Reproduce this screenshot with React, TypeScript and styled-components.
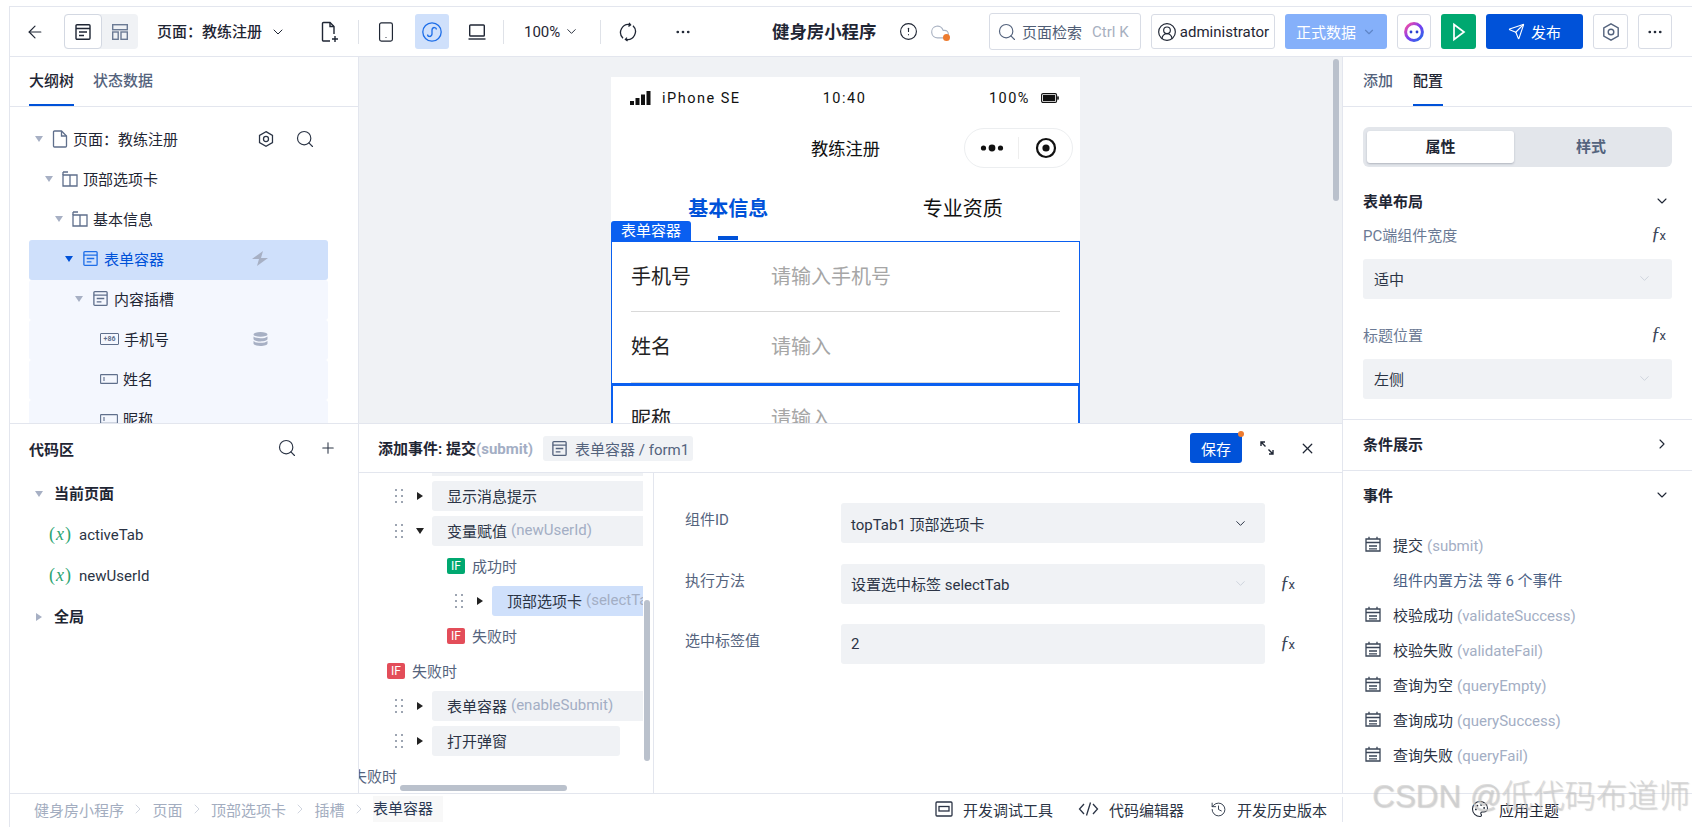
import React from 'react';
import styled, { createGlobalStyle } from 'styled-components';
import {
  ArrowLeft, ChevronDown, ChevronRight, CircleAlert, CircleUserRound, Cloud, Ellipsis,
  History, Palette, Plus, Search, Send, Smartphone, X,
} from 'lucide-react';

const Global = createGlobalStyle`
  html, body { margin: 0; padding: 0; background: #fff; }
  body { font-family: Roboto, "Noto Sans CJK SC", sans-serif; color: #1f2634; overflow: hidden; }
  * { box-sizing: border-box; }
`;

const line = '#e3e6ee';
const fill = '#f0f2f5';
const blue = '#0052d9';

const Page = styled.div`
  position: relative; width: 1692px; height: 827px; overflow: hidden; padding: 6px 0 0 9px; background: #fff;
`;
const Frame = styled.div`
  height: 100%; display: flex; flex-direction: column; border-top: 1px solid ${line}; border-left: 1px solid ${line};
`;

/* top bar */
const TopBar = styled.header`
  flex: 0 0 50px; display: flex; align-items: center; padding: 0 20px 0 13px; border-bottom: 1px solid ${line};
`;
const ToolSlot = styled.span<{ $ml?: number; $w?: number; $active?: boolean }>`
  flex: 0 0 auto; display: inline-flex; align-items: center; justify-content: center;
  width: ${p => p.$w ?? 24}px; height: 35px; margin-left: ${p => p.$ml ?? 0}px; border-radius: 3px;
  background: ${p => (p.$active ? '#cfe0fb' : 'transparent')}; color: #1f2634;
`;
const ViewToggle = styled.div`
  flex: 0 0 74px; height: 35px; margin-left: 17px; display: flex; background: ${fill}; border-radius: 4px;
`;
const ViewOption = styled.span<{ $on?: boolean }>`
  flex: 1; display: flex; align-items: center; justify-content: center;
  background: ${p => (p.$on ? '#fff' : 'transparent')}; border: ${p => (p.$on ? `1px solid #d3d8e2` : 'none')};
  border-radius: 4px; color: ${p => (p.$on ? '#1f2634' : '#6b7a94')};
`;
const PageName = styled.span`
  margin-left: 19px; font-size: 15px; line-height: 20px; font-weight: 500; white-space: nowrap; width: 105px;
`;
const ToolSep = styled.i<{ $ml: number }>`
  flex: 0 0 1px; height: 24px; margin-left: ${p => p.$ml}px; background: #dfe2e8;
`;
const Zoom = styled.span`
  margin-left: 20px; width: 36px; font-size: 15px; line-height: 20px;
`;
const Title = styled.strong`
  margin-left: 77px; width: 105px; font-size: 17.4px; line-height: 24px; font-weight: 700; white-space: nowrap;
`;
const CloudWrap = styled(ToolSlot)`
  position: relative; color: #a9b2c2;
`;
const CloudDot = styled.i`
  position: absolute; right: 0; bottom: 8px; width: 7px; height: 7px; border-radius: 50%; background: #ed7b2f;
`;
const TopRight = styled.div`
  margin-left: auto; display: flex; align-items: center; gap: 10px;
`;
const SearchBox = styled.div`
  width: 152px; height: 37px; display: flex; align-items: center; padding: 0 7px;
  border: 1px solid #d8dce5; border-radius: 3px; color: #6b7a94; font-size: 15px; white-space: nowrap;
`;
const SearchHint = styled.span`
  margin-left: 5px; color: #4f5d75;
`;
const KeyHint = styled.span`
  margin-left: 10px; color: #a7b0c0;
`;
const OutlineBtn = styled.button<{ $w: number }>`
  width: ${p => p.$w}px; height: 35px; padding: 0; display: flex; align-items: center; justify-content: center; gap: 3px;
  background: #fff; border: 1px solid #d8dce5; border-radius: 3px; color: #1f2634;
  font: 400 15px Roboto, "Noto Sans CJK SC", sans-serif;
`;
const SolidBtn = styled.button<{ $w: number; $bg: string }>`
  width: ${p => p.$w}px; height: 35px; padding: 0; display: flex; align-items: center; justify-content: center; gap: 6px;
  background: ${p => p.$bg}; border: 0; border-radius: 3px; color: #fff;
  font: 400 15px Roboto, "Noto Sans CJK SC", sans-serif;
`;

/* workspace */
const Workspace = styled.div`
  flex: 0 0 736px; min-height: 0; display: flex;
`;
const Stage = styled.div`
  flex: 0 0 1333px; min-height: 0; display: flex; flex-direction: column; border-right: 1px solid ${line};
`;
const StageTop = styled.div`
  flex: 0 0 367px; min-height: 0; display: flex; border-bottom: 1px solid ${line};
`;
const StageBottom = styled.div`
  flex: 1; min-height: 0; display: flex;
`;
const SidePane = styled.section`
  flex: 0 0 349px; min-height: 0; display: flex; flex-direction: column; border-right: 1px solid ${line}; overflow: hidden;
`;
const Tabs = styled.nav<{ $gap: number; $pl: number }>`
  flex: 0 0 50px; display: flex; gap: ${p => p.$gap}px; padding-left: ${p => p.$pl}px; border-bottom: 1px solid ${line};
`;
const Tab = styled.span<{ $on?: boolean }>`
  height: 49px; line-height: 48px; font-size: 15px; font-weight: 500; white-space: nowrap;
  color: ${p => (p.$on ? '#1f2634' : '#54637d')};
  border-bottom: 2px solid ${p => (p.$on ? blue : 'transparent')};
`;
const TreeList = styled.div`
  padding: 13px 30px 0 19px; display: flex; flex-direction: column;
`;
const TreeRow = styled.div<{ $level: number; $state?: 'on' | 'sub' }>`
  flex: 0 0 40px; height: 40px; display: flex; align-items: center; padding: 0 0 3px ${p => 6 + p.$level * 10}px;
  border-radius: 3px; font-size: 15px; white-space: nowrap;
  background: ${p => (p.$state === 'on' ? '#cfe0fb' : p.$state === 'sub' ? '#f4f7fe' : 'transparent')};
  color: ${p => (p.$state === 'on' ? blue : '#1f2634')};
`;
const Arrow = styled.i<{ $dir?: 'down' | 'right'; $color?: string; $size?: number }>`
  flex: 0 0 auto; width: 0; height: 0; display: inline-block;
  border-style: solid;
  ${p => {
    const s = p.$size ?? 4;
    return p.$dir === 'right'
      ? `border-width: ${s}px 0 ${s}px ${s + 2}px; border-color: transparent transparent transparent ${p.$color ?? '#a7b0c4'};`
      : `border-width: ${s + 2}px ${s}px 0 ${s}px; border-color: ${p.$color ?? '#a7b0c4'} transparent transparent transparent;`;
  }}
`;
const TreeArrow = styled(Arrow)`
  margin-right: 9px;
`;
const TreeIcon = styled.span<{ $color?: string }>`
  flex: 0 0 16px; display: flex; margin-right: 5px; color: ${p => p.$color ?? '#5f6f8c'};
`;
const LeafIcon = styled.span`
  flex: 0 0 18px; display: flex; margin: 0 5px 0 65px; color: #5f6f8c;
`;
const RowIcons = styled.span<{ $left: number }>`
  position: absolute; left: ${p => p.$left}px; display: flex; align-items: center; gap: 20px; color: #2b3445;
`;
const RowRel = styled(TreeRow)`
  position: relative;
`;

/* canvas */
const Canvas = styled.main`
  position: relative; flex: 1; background: ${fill}; overflow: hidden; padding-top: 20px;
`;
const CanvasThumb = styled.i`
  position: absolute; right: 3px; top: 2px; width: 6px; height: 142px; border-radius: 3px; background: #bac1cc;
`;
const Phone = styled.div`
  width: 469px; margin-left: 252px; background: #fff; font-family: Roboto, "Noto Sans CJK SC", sans-serif;
`;
const StatusBar = styled.div`
  height: 42px; display: grid; grid-template-columns: 1fr 1fr 1fr; align-items: center; padding: 0 21px 0 19px;
  font-size: 14.5px; letter-spacing: 1.5px; color: #111;
`;
const StatusCell = styled.span<{ $align: string }>`
  display: flex; align-items: center; justify-content: ${p => p.$align}; gap: 11px; white-space: nowrap;
`;
const NavBar = styled.div`
  position: relative; height: 58px; padding-bottom: 2px; display: flex; align-items: center; justify-content: center; font-size: 17.3px; color: #111;
`;
const Capsule = styled.div`
  position: absolute; right: 7px; top: 9px; width: 109px; height: 40px; display: flex; align-items: center;
  border: 1px solid #eceef0; border-radius: 20px; background: #fff;
`;
const CapsulePart = styled.span`
  flex: 1; display: flex; align-items: center; justify-content: center;
`;
const CapsuleSep = styled.i`
  width: 1px; height: 22px; background: #eee;
`;
const PhoneTabs = styled.div`
  position: relative; height: 64px; display: flex;
`;
const PhoneTab = styled.span<{ $on?: boolean }>`
  position: relative; flex: 1; text-align: center; padding-top: 18px; font-size: 20px; line-height: 28px;
  font-weight: ${p => (p.$on ? 700 : 400)}; color: ${p => (p.$on ? blue : '#111')};
  ${p => p.$on && `&::after { content: ''; position: absolute; left: 50%; margin-left: -10px; bottom: 1px; width: 20px; height: 4px; background: ${blue}; }`}
`;
const SelectTag = styled.span`
  position: absolute; left: 0; bottom: 0; width: 80px; height: 20px; background: #0a5ff0; color: #fff;
  border-radius: 3px 3px 0 0; font-size: 15px; line-height: 20px; text-align: center;
`;
const FormBox = styled.div`
  border: 1px solid #0a5ff0; padding: 0 19px;
`;
const NextFormBox = styled.div`
  border: 2px solid #0a5ff0; padding: 0 18px;
`;
const FormRow = styled.div<{ $h: number; $line?: boolean }>`
  height: ${p => p.$h}px; padding-bottom: 3px; display: flex; align-items: center; font-size: 20px;
  border-bottom: ${p => (p.$line ? '1px solid #d9d9d9' : 'none')};
`;
const FormLabel = styled.span`
  width: 140px; color: #222;
`;
const FormHolder = styled.span`
  color: #a6a6a6;
`;

/* code zone */
const CodeHead = styled.div`
  flex: 0 0 50px; display: flex; align-items: center; padding: 0 21px 2px 19px; font-size: 15px; font-weight: 700;
`;
const CodeTools = styled.span`
  margin-left: auto; display: flex; align-items: center; gap: 22px; color: #2b3445;
`;
const CodeGroup = styled.div`
  flex: 0 0 40px; margin-top: 1px; padding: 0 0 2px 25px; display: flex; align-items: center; font-size: 15px; font-weight: 700; line-height: 20px;
`;
const GroupMark = styled.span`
  flex: 0 0 8px; display: flex; justify-content: center; margin-right: 11px;
`;
const CodeVar = styled.div`
  flex: 0 0 41px; display: flex; align-items: center; padding: 0 0 2px 39px; font-size: 15px; color: #2b3445;
`;
const VarMark = styled.span`
  width: 30px; font-family: "Liberation Serif", serif; font-size: 18px; color: #2ba471; letter-spacing: 1px;
  em { font-style: italic; }
`;

/* event editor */
const Editor = styled.section`
  flex: 1; min-width: 0; min-height: 0; display: flex; flex-direction: column;
`;
const EditorHead = styled.div`
  flex: 0 0 49px; display: flex; align-items: center; padding: 0 26px 0 19px; border-bottom: 1px solid ${line};
`;
const EditorTitle = styled.strong`
  font-size: 15px; font-weight: 700; white-space: nowrap; padding-bottom: 2px;
  span { color: #a3aec4; }
`;
const TargetChip = styled.span`
  margin-left: 10px; height: 25px; width: 150px; display: flex; align-items: center; gap: 7px; padding-left: 8px;
  background: ${fill}; border-radius: 3px; font-size: 15px; color: #54637d; white-space: nowrap;
`;
const SaveBtn = styled.button`
  position: relative; margin-left: auto; width: 52px; height: 30px; padding: 0; border: 0; border-radius: 3px;
  background: ${blue}; color: #fff; font: 400 15px Roboto, "Noto Sans CJK SC", sans-serif;
`;
const SaveDot = styled.i`
  position: absolute; right: -2px; top: -2px; width: 6px; height: 6px; border-radius: 50%; background: #ed7b2f;
`;
const HeadIcon = styled.span<{ $ml: number }>`
  display: flex; margin-left: ${p => p.$ml}px; color: #1f2634;
`;
const EditorBody = styled.div`
  flex: 1; min-height: 0; display: flex;
`;
const EventList = styled.div`
  position: relative; flex: 0 0 295px; overflow: hidden; border-right: 1px solid ${line}; padding-right: 10px;
`;
const ClippedBlock = styled.div`
  height: 3px; margin: 0 0 5px 73px; background: ${fill};
`;
const Step = styled.div<{ $indent?: number }>`
  height: 30px; margin-bottom: 5px; display: flex; align-items: center; padding-left: ${p => p.$indent ?? 0}px;
  white-space: nowrap; font-size: 15px;
`;
const Grip = styled.span`
  flex: 0 0 8px; display: flex; margin-right: 13px; color: #7d8799;
`;
const StepMark = styled.span`
  flex: 0 0 8px; display: flex; justify-content: center; margin-right: 8px;
`;
const StepBlock = styled.div<{ $tone?: 'sel'; $w?: number }>`
  height: 30px; flex: ${p => (p.$w ? `0 0 ${p.$w}px` : '1')}; min-width: 0; overflow: hidden; display: flex; align-items: center; padding: 0 0 2px 15px;
  border-radius: ${p => (p.$w ? '3px' : '3px 0 0 3px')}; background: ${p => (p.$tone === 'sel' ? '#cfe0fb' : fill)}; color: #2b3445;
  em { font-style: normal; color: #a3aec4; margin-left: 4px; }
`;
const IfBadge = styled.span<{ $bg: string }>`
  width: 18px; height: 16px; margin-right: 7px; background: ${p => p.$bg}; color: #fff; border-radius: 2px;
  font-size: 12px; line-height: 16px; text-align: center;
`;
const BranchText = styled.span<{ $clip?: boolean }>`
  color: #54637d; padding-bottom: 2px; ${p => p.$clip && 'margin-left: -7px;'}
`;
const VThumb = styled.i`
  position: absolute; right: 3px; top: 127px; width: 6px; height: 161px; border-radius: 3px; background: #bac1cc;
`;
const HThumb = styled.i`
  position: absolute; left: 41px; bottom: 2px; width: 167px; height: 6px; border-radius: 3px; background: #bac1cc;
`;
const ActionForm = styled.div`
  flex: 1; padding: 30px 0 0 31px; display: flex; flex-direction: column; gap: 20.5px;
`;
const ActionRow = styled.div`
  display: flex; align-items: center;
`;
const ActionLabel = styled.label`
  flex: 0 0 156px; font-size: 15px; color: #54637d; margin-top: -9px;
`;
const Field = styled.div<{ $w: number }>`
  flex: 0 0 ${p => p.$w}px; height: 40px; display: flex; align-items: center; justify-content: space-between;
  padding: 0 17px 0 10px; background: ${fill}; border-radius: 3px; font-size: 15px; color: #2b3445; white-space: nowrap;
`;
const Fx = styled.span<{ $ml?: number }>`
  margin-left: ${p => p.$ml ?? 0}px; font-family: "Liberation Serif", "DejaVu Serif", serif; font-style: italic; font-size: 19px; color: #3a4557; line-height: 20px;
  small { font-family: Roboto, sans-serif; font-style: normal; font-size: 13px; margin-left: -1px; }
`;

/* right panel */
const RightPane = styled.aside`
  flex: 1; min-width: 0; display: flex; flex-direction: column;
`;
const RightBody = styled.div`
  padding: 20px 20px 0 20px;
`;
const Segment = styled.div`
  height: 40px; display: flex; padding: 4px; background: #e3e6eb; border-radius: 6px;
`;
const SegItem = styled.span<{ $on?: boolean }>`
  flex: ${p => (p.$on ? '0 0 147px' : 1)}; text-align: center; line-height: 32px; font-size: 15px; font-weight: 700; border-radius: 3px;
  background: ${p => (p.$on ? '#fff' : 'transparent')}; color: ${p => (p.$on ? '#1f2634' : '#54637d')};
  box-shadow: ${p => (p.$on ? '0 1px 2px rgba(60,70,90,.3)' : 'none')};
`;
const SectionHead = styled.div<{ $h: number; $mt?: number }>`
  height: ${p => p.$h}px; margin-top: ${p => p.$mt ?? 0}px; padding-bottom: 3px; display: flex; align-items: center; justify-content: space-between;
  font-size: 15px; font-weight: 700; color: #1f2634;
  svg { margin: 0 2px 0 0; }
`;
const PropLabel = styled.div<{ $mt: number }>`
  height: 22px; margin-top: ${p => p.$mt}px; display: flex; align-items: center; justify-content: space-between;
  padding: 0 6px 3px 0; font-size: 15px; color: #6b7a94;
`;
const PropSelect = styled.div`
  height: 40px; margin-top: 12px; display: flex; align-items: center; justify-content: space-between; padding: 0 20px 2px 11px;
  background: ${fill}; border-radius: 3px; font-size: 15px; color: #2b3445;
`;
const Divider = styled.div<{ $mt?: number }>`
  height: 1px; background: ${line}; margin-top: ${p => p.$mt ?? 0}px;
`;
const Section = styled.div`
  padding: 0 20px;
`;
const EventLines = styled.div`
  padding: 7px 0 0 2px; display: flex; flex-direction: column;
`;
const EventLine = styled.div<{ $sub?: boolean }>`
  height: 35px; padding: 0 0 3px ${p => (p.$sub ? 28 : 0)}px; display: flex; align-items: center; gap: 12px;
  font-size: 15px; color: ${p => (p.$sub ? '#4a5f85' : '#2b3445')}; white-space: nowrap;
  em { font-style: normal; color: #a3aec4; margin-left: 4px; }
  svg { flex: 0 0 16px; color: #3a4557; }
`;

/* footer */
const Footer = styled.footer`
  flex: 1; min-height: 0; display: flex; align-items: center; padding-bottom: 3px; border-top: 1px solid ${line};
`;
const Crumbs = styled.div`
  flex: 1; display: flex; align-items: center; padding-left: 24px; font-size: 15px; color: #a3adc0; white-space: nowrap;
`;
const CrumbSep = styled.span`
  display: flex; width: 28.5px; justify-content: center; color: #b8c0cf;
`;
const CrumbNow = styled.span`
  height: 26px; line-height: 26px; padding-right: 10px; background: #f8f8f8; color: #2b3a55;
`;
const FootTools = styled.div`
  height: 25px; flex: 0 0 auto; display: flex; align-items: center; padding-right: 15px; border-right: 1px solid ${line};
  font-size: 15px; color: #2b3445; white-space: nowrap;
`;
const FootTool = styled.span<{ $ml: number }>`
  display: flex; align-items: center; gap: 10px; margin-left: ${p => p.$ml}px;
`;
const ThemeCell = styled.div`
  flex: 0 0 349px; display: flex; align-items: center; gap: 10px; padding-left: 128px; font-size: 15px; color: #1f2634; white-space: nowrap;
`;
const Watermark = styled.div`
  position: absolute; left: 1372px; top: 777px; pointer-events: none; white-space: nowrap;
  font-family: "Liberation Sans", "Noto Sans CJK SC", sans-serif; font-size: 31.4px; line-height: 40px; font-weight: 300;
  color: rgba(205,205,205,.7); text-shadow: 1px 1px 1px rgba(150,150,150,.4);
`;

/* icons */
type IP = { s?: number };
const FormIcon = ({ s = 18 }: IP) => (
  <svg width={s} height={s} viewBox="0 0 18 18" fill="none" stroke="currentColor" strokeWidth="1.4">
    <rect x="2" y="1.7" width="14" height="14.6" rx="1" /><path d="M2 5.5h14M5 9h8M5 12.5h5" />
  </svg>
);
const LayoutIcon = () => (
  <svg width="18" height="18" viewBox="0 0 18 18" fill="none" stroke="currentColor" strokeWidth="1.4">
    <rect x="1.7" y="1.7" width="14.6" height="5" /><rect x="1.7" y="9" width="5.5" height="7.3" /><rect x="10" y="9" width="6.3" height="7.3" />
  </svg>
);
const FileAddIcon = () => (
  <svg width="20" height="24" viewBox="0 0 20 24" fill="none" stroke="currentColor" strokeWidth="1.4">
    <path d="M10 21H3.5a1 1 0 0 1-1-1V3.5a1 1 0 0 1 1-1H10l4 4V14" /><path d="M10 2.5V6.5H14M15 16v6M12 19h6" />
  </svg>
);
const MiniIcon = () => (
  <svg width="22" height="22" viewBox="0 0 22 22" fill="none" stroke="#1e6ee8" strokeWidth="1.3">
    <circle cx="11" cy="11" r="9.2" />
    <path d="M6.6 13.4c0 2.6 3.8 3 4.4-.2V8.8c.6-3.2 4.4-2.8 4.4-.2" />
  </svg>
);
const LaptopIcon = () => (
  <svg width="20" height="20" viewBox="0 0 20 20" fill="none" stroke="currentColor" strokeWidth="1.4">
    <rect x="2.7" y="3" width="14.6" height="11" rx=".8" /><path d="M1.5 17h17" />
  </svg>
);
const SyncIcon = () => (
  <svg width="20" height="20" viewBox="0 0 20 20" fill="none" stroke="currentColor" strokeWidth="1.3">
    <path d="M12 2.6A8 8 0 0 0 5 16.2M8 17.4a8 8 0 0 0 7-13.6" /><path d="M11 .8 12.6 2.8 10.4 4.4M9 15.6l-1.6 1.8L9.6 19" />
  </svg>
);
const AiIcon = () => (
  <svg width="22" height="22" viewBox="0 0 22 22" fill="none">
    <defs><linearGradient id="aig" x1="0" y1="0" x2="1" y2="1"><stop offset="0" stopColor="#ff4fa0" /><stop offset=".5" stopColor="#7b3df0" /><stop offset="1" stopColor="#1e6ee8" /></linearGradient></defs>
    <circle cx="11" cy="11" r="8.4" stroke="url(#aig)" strokeWidth="3" /><circle cx="8" cy="11" r="1.4" fill="#2a3fd0" /><circle cx="14" cy="11" r="1.4" fill="#2a3fd0" />
  </svg>
);
const PlayIcon = () => (
  <svg width="16" height="20" viewBox="0 0 16 20" fill="none" stroke="#fff" strokeWidth="1.7"><path d="M3 2.5 13 10 3 17.5Z" /></svg>
);
const HexIcon = ({ s = 20, color }: { s?: number; color?: string }) => (
  <svg width={s} height={s} viewBox="0 0 20 20" fill="none" stroke={color ?? 'currentColor'} strokeWidth="1.4">
    <path d="M10 1.8 17.2 6v8L10 18.2 2.8 14V6Z" /><circle cx="10" cy="10" r="2.8" />
  </svg>
);
const TabBoxIcon = () => (
  <svg width="16" height="16" viewBox="0 0 16 16" fill="none" stroke="currentColor" strokeWidth="1.3">
    <path d="M1 1h5M1 4h14v11H1zM8 4v11" /><path d="M1 1v3" />
  </svg>
);
const PageIcon = () => (
  <svg width="16" height="18" viewBox="0 0 16 18" fill="none" stroke="currentColor" strokeWidth="1.3">
    <path d="M9.5 1H2.5a1 1 0 0 0-1 1v14a1 1 0 0 0 1 1h11a1 1 0 0 0 1-1V6Z" /><path d="M9.5 1v5h5" />
  </svg>
);
const PhoneNumIcon = () => (
  <svg width="19" height="12" viewBox="0 0 19 12" fill="none" stroke="currentColor" strokeWidth="1">
    <rect x=".5" y=".5" width="18" height="11" rx=".5" />
    <text x="9.5" y="8.4" textAnchor="middle" fontFamily="Roboto, sans-serif" fontSize="7" fontWeight="700" fill="currentColor" stroke="none">+86</text>
  </svg>
);
const InputIcon = () => (
  <svg width="18" height="10" viewBox="0 0 18 10" fill="none" stroke="currentColor" strokeWidth="1.1">
    <rect x=".6" y=".6" width="16.8" height="8.8" rx=".5" /><path d="M4 3v4" />
  </svg>
);
const BoltIcon = () => (
  <svg width="16" height="15" viewBox="0 0 16 15" fill="#a7b0c4"><path d="M11 0 0 8h7l-2 7 11-8H9Z" /></svg>
);
const StackIcon = () => (
  <svg width="15" height="14" viewBox="0 0 15 14" fill="#a7b0c4">
    <ellipse cx="7.5" cy="2.4" rx="7" ry="2.4" />
    <path d="M.5 4.4c1.4 1.3 4 1.8 7 1.8s5.600-.5 7-1.800V7c0 1.300-3.100 2.400-7 2.400S.5 8.300.5 7Z" />
    <path d="M.5 9c1.400 1.300 4 1.800 7 1.800s5.600-.5 7-1.800v2.400c0 1.400-3.100 2.500-7 2.500s-7-1.100-7-2.500Z" />
  </svg>
);
const GripIcon = () => (
  <svg width="8" height="14" viewBox="0 0 8 14" fill="currentColor">
    {[1, 7, 13].map(y => [1, 7].map(x => <circle key={`${x}${y}`} cx={x} cy={y} r="1" />))}
  </svg>
);
const EventIcon = () => (
  <svg width="16" height="16" viewBox="0 0 16 16" fill="none" stroke="currentColor" strokeWidth="1.3">
    <path d="M1 3h14v12H1zM4 .8V3M12 .8V3" /><path d="M1 6.5h14M4 10h8M4 12.8h8" />
  </svg>
);
const ExpandIcon = () => (
  <svg width="18" height="18" viewBox="0 0 18 18" fill="none" stroke="currentColor" strokeWidth="1.4">
    <path d="M3 7V3h4M3 3l4.5 4.500M15 11v4h-4M15 15l-4.500-4.500" />
  </svg>
);
const DebugIcon = () => (
  <svg width="18" height="18" viewBox="0 0 18 18" fill="none" stroke="currentColor" strokeWidth="1.3">
    <rect x="1" y="2" width="16" height="14" rx="1" /><rect x="4" y="6.5" width="10" height="4.5" />
  </svg>
);
const CodeGlyph = () => (
  <svg width="21" height="16" viewBox="0 0 21 16" fill="none" stroke="currentColor" strokeWidth="1.3">
    <path d="M6 3 1.500 8 6 13M15 3l4.500 5L15 13M12.500 1.500 8.500 14.500" />
  </svg>
);
const SignalIcon = () => (
  <svg width="21" height="14" viewBox="0 0 21 14" fill="#111">
    <rect x="0" y="10" width="4" height="4" /><rect x="5.500" y="7" width="4" height="7" /><rect x="11" y="3.500" width="4" height="10.500" /><rect x="16.500" y="0" width="4" height="14" />
  </svg>
);
const BatteryIcon = () => (
  <svg width="18" height="10" viewBox="0 0 18 10">
    <rect x=".6" y=".6" width="15" height="8.800" rx="1.400" fill="none" stroke="#111" strokeWidth="1.100" />
    <rect x="2" y="2" width="12.200" height="6" fill="#111" /><rect x="16.200" y="3.400" width="1.600" height="3.200" fill="#111" />
  </svg>
);
const DotsIcon = () => (
  <svg width="24" height="8" viewBox="0 0 24 8" fill="#111"><circle cx="3.500" cy="4" r="2.600" /><circle cx="12" cy="4" r="3.400" /><circle cx="20.500" cy="4" r="2.600" /></svg>
);
const RecordIcon = () => (
  <svg width="22" height="22" viewBox="0 0 22 22" fill="none"><circle cx="11" cy="11" r="9" stroke="#111" strokeWidth="2.200" /><circle cx="11" cy="11" r="3.600" fill="#111" /></svg>
);
const FxMark = ({ ml }: { ml?: number }) => <Fx $ml={ml}>ƒ<small>x</small></Fx>;

const events: [string, string][] = [
  ['校验成功', 'validateSuccess'], ['校验失败', 'validateFail'], ['查询为空', 'queryEmpty'], ['查询成功', 'querySuccess'], ['查询失败', 'queryFail'],
];

const Handle = ({ down }: { down?: boolean }) => (
  <>
    <Grip><GripIcon /></Grip>
    <StepMark><Arrow $dir={down ? 'down' : 'right'} $color="#222" /></StepMark>
  </>
);

export default function App() {
  return (
    <Page>
      <Global />
      <Frame>
        <TopBar>
          <ToolSlot><ArrowLeft size={20} strokeWidth={1.4} /></ToolSlot>
          <ViewToggle>
            <ViewOption $on><FormIcon /></ViewOption>
            <ViewOption><LayoutIcon /></ViewOption>
          </ViewToggle>
          <PageName>页面：教练注册</PageName>
          <ToolSlot $ml={8} $w={16}><ChevronDown size={16} strokeWidth={1.5} /></ToolSlot>
          <ToolSlot $ml={32}><FileAddIcon /></ToolSlot>
          <ToolSep $ml={16} />
          <ToolSlot $ml={15}><Smartphone size={22} strokeWidth={1.3} /></ToolSlot>
          <ToolSlot $ml={17} $w={34} $active><MiniIcon /></ToolSlot>
          <ToolSlot $ml={16}><LaptopIcon /></ToolSlot>
          <ToolSep $ml={14} />
          <Zoom>100%</Zoom>
          <ToolSlot $ml={3} $w={16}><ChevronDown size={15} strokeWidth={1.5} /></ToolSlot>
          <ToolSep $ml={21} />
          <ToolSlot $ml={15}><SyncIcon /></ToolSlot>
          <ToolSlot $ml={31}><Ellipsis size={18} strokeWidth={1.6} /></ToolSlot>
          <Title>健身房小程序</Title>
          <ToolSlot $ml={21} $w={20}><CircleAlert size={19} strokeWidth={1.4} /></ToolSlot>
          <CloudWrap $ml={12} $w={20}><Cloud size={20} strokeWidth={1.4} /><CloudDot /></CloudWrap>
          <TopRight>
            <SearchBox>
              <Search size={20} strokeWidth={1.4} color="#54637d" />
              <SearchHint>页面检索</SearchHint>
              <KeyHint>Ctrl K</KeyHint>
            </SearchBox>
            <OutlineBtn $w={124}><CircleUserRound size={20} strokeWidth={1.4} />administrator</OutlineBtn>
            <SolidBtn $w={102} $bg="#85b0fa">正式数据<ChevronDown size={14} color="#5f86c8" /></SolidBtn>
            <OutlineBtn $w={34}><AiIcon /></OutlineBtn>
            <SolidBtn $w={35} $bg="#00a870"><PlayIcon /></SolidBtn>
            <SolidBtn $w={97} $bg={blue}><Send size={17} strokeWidth={1.6} />发布</SolidBtn>
            <OutlineBtn $w={35}><HexIcon color="#54637d" /></OutlineBtn>
            <OutlineBtn $w={34}><Ellipsis size={18} strokeWidth={1.6} /></OutlineBtn>
          </TopRight>
        </TopBar>
        <Workspace>
          <Stage>
            <StageTop>
              <SidePane>
                <Tabs $gap={19} $pl={19}>
                  <Tab $on>大纲树</Tab>
                  <Tab>状态数据</Tab>
                </Tabs>
                <TreeList>
                  <RowRel $level={0}>
                    <TreeArrow /><TreeIcon><PageIcon /></TreeIcon>页面：教练注册
                    <RowIcons $left={228}><HexIcon s={18} /><Search size={20} strokeWidth={1.4} /></RowIcons>
                  </RowRel>
                  <TreeRow $level={1}><TreeArrow /><TreeIcon><TabBoxIcon /></TreeIcon>顶部选项卡</TreeRow>
                  <TreeRow $level={2}><TreeArrow /><TreeIcon><TabBoxIcon /></TreeIcon>基本信息</TreeRow>
                  <RowRel $level={3} $state="on">
                    <TreeArrow $color={blue} /><TreeIcon $color="#1e6ee8"><FormIcon s={17} /></TreeIcon>表单容器
                    <RowIcons $left={223}><BoltIcon /></RowIcons>
                  </RowRel>
                  <TreeRow $level={4} $state="sub"><TreeArrow /><TreeIcon><FormIcon s={17} /></TreeIcon>内容插槽</TreeRow>
                  <RowRel $level={0} $state="sub">
                    <LeafIcon><PhoneNumIcon /></LeafIcon>手机号
                    <RowIcons $left={224}><StackIcon /></RowIcons>
                  </RowRel>
                  <TreeRow $level={0} $state="sub"><LeafIcon><InputIcon /></LeafIcon>姓名</TreeRow>
                  <TreeRow $level={0} $state="sub"><LeafIcon><InputIcon /></LeafIcon>昵称</TreeRow>
                </TreeList>
              </SidePane>
              <Canvas>
                <Phone>
                  <StatusBar>
                    <StatusCell $align="flex-start"><SignalIcon />iPhone SE</StatusCell>
                    <StatusCell $align="center">10:40</StatusCell>
                    <StatusCell $align="flex-end">100%<BatteryIcon /></StatusCell>
                  </StatusBar>
                  <NavBar>
                    教练注册
                    <Capsule>
                      <CapsulePart><DotsIcon /></CapsulePart>
                      <CapsuleSep />
                      <CapsulePart><RecordIcon /></CapsulePart>
                    </Capsule>
                  </NavBar>
                  <PhoneTabs>
                    <PhoneTab $on>基本信息</PhoneTab>
                    <PhoneTab>专业资质</PhoneTab>
                    <SelectTag>表单容器</SelectTag>
                  </PhoneTabs>
                  <FormBox>
                    <FormRow $h={70} $line><FormLabel>手机号</FormLabel><FormHolder>请输入手机号</FormHolder></FormRow>
                    <FormRow $h={71} $line><FormLabel>姓名</FormLabel><FormHolder>请输入</FormHolder></FormRow>
                  </FormBox>
                  <NextFormBox>
                    <FormRow $h={66}><FormLabel>昵称</FormLabel><FormHolder>请输入</FormHolder></FormRow>
                  </NextFormBox>
                </Phone>
                <CanvasThumb />
              </Canvas>
            </StageTop>
            <StageBottom>
              <SidePane>
                <CodeHead>
                  代码区
                  <CodeTools><Search size={20} strokeWidth={1.4} /><Plus size={18} strokeWidth={1.4} /></CodeTools>
                </CodeHead>
                <CodeGroup><GroupMark><Arrow /></GroupMark>当前页面</CodeGroup>
                <CodeVar><VarMark>(<em>x</em>)</VarMark>activeTab</CodeVar>
                <CodeVar><VarMark>(<em>x</em>)</VarMark>newUserId</CodeVar>
                <CodeGroup><GroupMark><Arrow $dir="right" /></GroupMark>全局</CodeGroup>
              </SidePane>
              <Editor>
                <EditorHead>
                  <EditorTitle>添加事件: 提交<span>(submit)</span></EditorTitle>
                  <TargetChip><FormIcon s={17} />表单容器 / form1</TargetChip>
                  <SaveBtn>保存<SaveDot /></SaveBtn>
                  <HeadIcon $ml={16}><ExpandIcon /></HeadIcon>
                  <HeadIcon $ml={23}><X size={17} strokeWidth={1.8} /></HeadIcon>
                </EditorHead>
                <EditorBody>
                  <EventList>
                    <ClippedBlock />
                    <Step $indent={36}><Handle /><StepBlock>显示消息提示</StepBlock></Step>
                    <Step $indent={36}><Handle down /><StepBlock>变量赋值<em>(newUserId)</em></StepBlock></Step>
                    <Step $indent={88}><IfBadge $bg="#00a870">IF</IfBadge><BranchText>成功时</BranchText></Step>
                    <Step $indent={96}><Handle /><StepBlock $tone="sel">顶部选项卡<em>(selectTab)</em></StepBlock></Step>
                    <Step $indent={88}><IfBadge $bg="#e34d59">IF</IfBadge><BranchText>失败时</BranchText></Step>
                    <Step $indent={28}><IfBadge $bg="#e34d59">IF</IfBadge><BranchText>失败时</BranchText></Step>
                    <Step $indent={36}><Handle /><StepBlock>表单容器<em>(enableSubmit)</em></StepBlock></Step>
                    <Step $indent={36}><Handle /><StepBlock $w={188}>打开弹窗</StepBlock></Step>
                    <Step><BranchText $clip>失败时</BranchText></Step>
                    <VThumb />
                    <HThumb />
                  </EventList>
                  <ActionForm>
                    <ActionRow>
                      <ActionLabel>组件ID</ActionLabel>
                      <Field $w={424}>topTab1 顶部选项卡<ChevronDown size={15} strokeWidth={1.6} /></Field>
                    </ActionRow>
                    <ActionRow>
                      <ActionLabel>执行方法</ActionLabel>
                      <Field $w={424}>设置选中标签 selectTab<ChevronDown size={15} strokeWidth={1.2} color="#c3c9d4" /></Field>
                      <FxMark ml={15} />
                    </ActionRow>
                    <ActionRow>
                      <ActionLabel>选中标签值</ActionLabel>
                      <Field $w={424}>2</Field>
                      <FxMark ml={15} />
                    </ActionRow>
                  </ActionForm>
                </EditorBody>
              </Editor>
            </StageBottom>
          </Stage>
          <RightPane>
            <Tabs $gap={20} $pl={20}>
              <Tab>添加</Tab>
              <Tab $on>配置</Tab>
            </Tabs>
            <RightBody>
              <Segment>
                <SegItem $on>属性</SegItem>
                <SegItem>样式</SegItem>
              </Segment>
              <SectionHead $h={22} $mt={24}>表单布局<ChevronDown size={16} strokeWidth={1.6} /></SectionHead>
              <PropLabel $mt={12}>PC端组件宽度<FxMark /></PropLabel>
              <PropSelect>适中<ChevronDown size={15} strokeWidth={1.2} color="#c3c9d4" /></PropSelect>
              <PropLabel $mt={26}>标题位置<FxMark /></PropLabel>
              <PropSelect>左侧<ChevronDown size={15} strokeWidth={1.2} color="#c3c9d4" /></PropSelect>
            </RightBody>
            <Divider $mt={20} />
            <Section><SectionHead $h={50}>条件展示<ChevronRight size={16} strokeWidth={1.6} /></SectionHead></Section>
            <Divider />
            <Section>
              <SectionHead $h={50}>事件<ChevronDown size={16} strokeWidth={1.6} /></SectionHead>
              <EventLines>
                <EventLine><EventIcon /><span>提交<em>(submit)</em></span></EventLine>
                <EventLine $sub>组件内置方法 等 6 个事件</EventLine>
                {events.map(([name, code]) => (
                  <EventLine key={code}><EventIcon /><span>{name}<em>({code})</em></span></EventLine>
                ))}
              </EventLines>
            </Section>
          </RightPane>
        </Workspace>
        <Footer>
          <Crumbs>
            健身房小程序<CrumbSep><ChevronRight size={16} strokeWidth={1} /></CrumbSep>
            页面<CrumbSep><ChevronRight size={16} strokeWidth={1} /></CrumbSep>
            顶部选项卡<CrumbSep><ChevronRight size={16} strokeWidth={1} /></CrumbSep>
            插槽<CrumbSep><ChevronRight size={16} strokeWidth={1} /></CrumbSep>
            <CrumbNow>表单容器</CrumbNow>
          </Crumbs>
          <FootTools>
            <FootTool $ml={0}><DebugIcon />开发调试工具</FootTool>
            <FootTool $ml={25}><CodeGlyph />代码编辑器</FootTool>
            <FootTool $ml={26}><History size={17} strokeWidth={1.3} />开发历史版本</FootTool>
          </FootTools>
          <ThemeCell><Palette size={18} strokeWidth={1.4} />应用主题</ThemeCell>
        </Footer>
      </Frame>
      <Watermark>CSDN @低代码布道师</Watermark>
    </Page>
  );
}
